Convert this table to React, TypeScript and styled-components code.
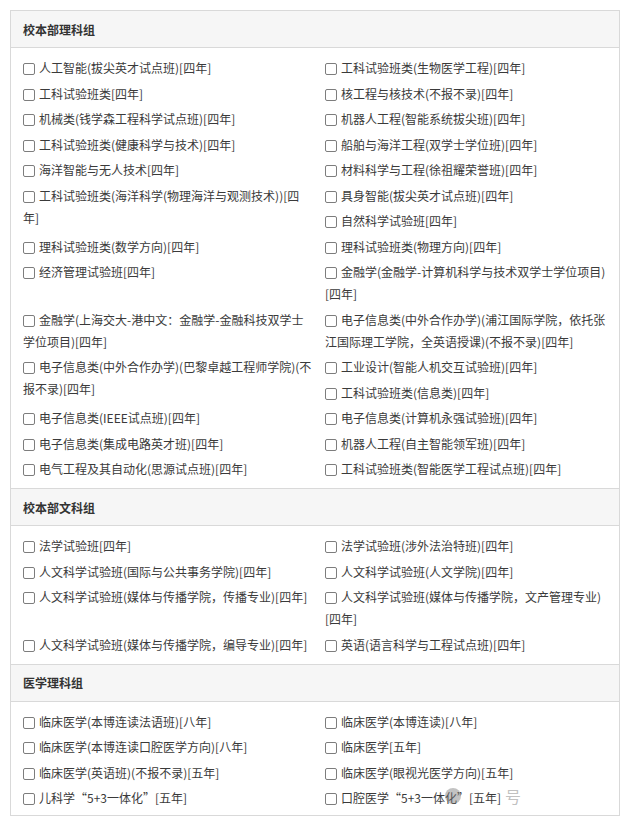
import React from "react";
import styled, { createGlobalStyle } from "styled-components";

const GlobalStyle = createGlobalStyle`
  html, body { margin: 0; padding: 0; background: #fff; }
  body { font-family: "Noto Sans CJK SC", "Noto Sans", sans-serif; }
  * { box-sizing: border-box; }
`;

const Page = styled.div`
  padding: 10px 0 0 10px;
  width: 629px;
`;

const Panel = styled.div`
  width: 610px;
  border: 1px solid #d9d9d9;
  position: relative;
`;

const Section = styled.section`
  & + & { border-top: 1px solid #d9d9d9; }
`;

const Header = styled.div`
  height: 37px;
  padding: 0 12px;
  display: flex;
  align-items: center;
  background: #f6f6f6;
  border-bottom: 1px solid #d9d9d9;
  font-size: 12px;
  font-weight: 700;
  color: #333;
`;

const Body = styled.div<{ $bottom: number }>`
  display: grid;
  grid-template-columns: 289px 285px;
  column-gap: 13px;
  row-gap: 3.5px;
  grid-auto-rows: minmax(22px, auto);
  padding: 9px 9px ${(p) => p.$bottom}px 12px;
  background: #fff;
`;

const Item = styled.label<{ $span?: boolean }>`
  grid-row: ${(p) => (p.$span ? "span 2" : "auto")};
  font-size: 12px;
  line-height: 22px;
  color: #3a3a3a;
  word-break: break-all;
`;

const Box = styled.input.attrs({ type: "checkbox" })`
  appearance: none;
  -webkit-appearance: none;
  display: inline-block;
  width: 12px;
  height: 12px;
  margin: 0 4px 0 0;
  border: 1px solid #7d7d7d;
  border-radius: 2px;
  background: #fff;
  vertical-align: -2px;
`;

const Watermark = styled.div`
  position: absolute;
  left: 434px;
  top: 773px;
  display: flex;
  align-items: center;
  gap: 44px;
  pointer-events: none;
`;

const WmLogo = styled.span`
  width: 16px;
  height: 16px;
  border-radius: 50%;
  background: rgba(120, 120, 120, 0.45);
`;

const WmText = styled.span`
  font-size: 16px;
  color: rgba(140, 140, 140, 0.55);
  font-family: "Noto Sans CJK SC", sans-serif;
`;

type Entry = { t: string; span?: boolean };

const sections: { title: string; bottom: number; items: Entry[] }[] = [
  {
    title: "校本部理科组",
    bottom: 8,
    items: [
      { t: "人工智能(拔尖英才试点班)[四年]" },
      { t: "工科试验班类(生物医学工程)[四年]" },
      { t: "工科试验班类[四年]" },
      { t: "核工程与核技术(不报不录)[四年]" },
      { t: "机械类(钱学森工程科学试点班)[四年]" },
      { t: "机器人工程(智能系统拔尖班)[四年]" },
      { t: "工科试验班类(健康科学与技术)[四年]" },
      { t: "船舶与海洋工程(双学士学位班)[四年]" },
      { t: "海洋智能与无人技术[四年]" },
      { t: "材料科学与工程(徐祖耀荣誉班)[四年]" },
      { t: "工科试验班类(海洋科学(物理海洋与观测技术))[四年]", span: true },
      { t: "具身智能(拔尖英才试点班)[四年]" },
      { t: "自然科学试验班[四年]" },
      { t: "理科试验班类(数学方向)[四年]" },
      { t: "理科试验班类(物理方向)[四年]" },
      { t: "经济管理试验班[四年]" },
      { t: "金融学(金融学-计算机科学与技术双学士学位项目)[四年]" },
      { t: "金融学(上海交大-港中文：金融学-金融科技双学士学位项目)[四年]" },
      { t: "电子信息类(中外合作办学)(浦江国际学院，依托张江国际理工学院，全英语授课)(不报不录)[四年]" },
      { t: "电子信息类(中外合作办学)(巴黎卓越工程师学院)(不报不录)[四年]", span: true },
      { t: "工业设计(智能人机交互试验班)[四年]" },
      { t: "工科试验班类(信息类)[四年]" },
      { t: "电子信息类(IEEE试点班)[四年]" },
      { t: "电子信息类(计算机永强试验班)[四年]" },
      { t: "电子信息类(集成电路英才班)[四年]" },
      { t: "机器人工程(自主智能领军班)[四年]" },
      { t: "电气工程及其自动化(思源试点班)[四年]" },
      { t: "工科试验班类(智能医学工程试点班)[四年]" },
    ],
  },
  {
    title: "校本部文科组",
    bottom: 8,
    items: [
      { t: "法学试验班[四年]" },
      { t: "法学试验班(涉外法治特班)[四年]" },
      { t: "人文科学试验班(国际与公共事务学院)[四年]" },
      { t: "人文科学试验班(人文学院)[四年]" },
      { t: "人文科学试验班(媒体与传播学院，传播专业)[四年]" },
      { t: "人文科学试验班(媒体与传播学院，文产管理专业)[四年]" },
      { t: "人文科学试验班(媒体与传播学院，编导专业)[四年]" },
      { t: "英语(语言科学与工程试点班)[四年]" },
    ],
  },
  {
    title: "医学理科组",
    bottom: 6,
    items: [
      { t: "临床医学(本博连读法语班)[八年]" },
      { t: "临床医学(本博连读)[八年]" },
      { t: "临床医学(本博连读口腔医学方向)[八年]" },
      { t: "临床医学[五年]" },
      { t: "临床医学(英语班)(不报不录)[五年]" },
      { t: "临床医学(眼视光医学方向)[五年]" },
      { t: "儿科学“5+3一体化”[五年]" },
      { t: "口腔医学“5+3一体化”[五年]" },
    ],
  },
];

export default function App() {
  return (
    <Page>
      <GlobalStyle />
      <Panel>
        {sections.map((s) => (
          <Section key={s.title}>
            <Header>{s.title}</Header>
            <Body $bottom={s.bottom}>
              {s.items.map((it) => (
                <Item key={it.t} $span={it.span}>
                  <Box />
                  {it.t}
                </Item>
              ))}
            </Body>
          </Section>
        ))}
        <Watermark>
          <WmLogo />
          <WmText>号</WmText>
        </Watermark>
      </Panel>
    </Page>
  );
}
